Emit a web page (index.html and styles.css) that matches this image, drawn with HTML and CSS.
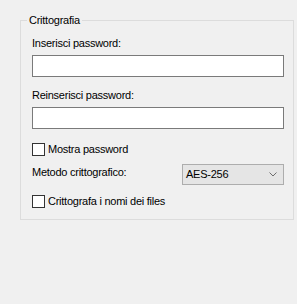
FILE: index.html
```html
<!DOCTYPE html>
<html lang="it">
<head>
<meta charset="utf-8">
<title>Crittografia</title>
<link rel="stylesheet" href="styles.css">
</head>
<body>
<div class="group">
  <span class="legend">Crittografia</span>
  <div class="label first">Inserisci password:</div>
  <div class="textbox"></div>
  <div class="label second">Reinserisci password:</div>
  <div class="textbox"></div>
  <label class="check first-check"><span class="box"></span><span class="text">Mostra password</span></label>
  <div class="method">
    <span class="label">Metodo crittografico:</span>
    <div class="combo">
      <span class="value">AES-256</span>
      <svg class="chevron" width="8" height="5" viewBox="0 0 8 5"><path d="M0.5 0.5 L4 4 L7.5 0.5" fill="none" stroke="#6d6d6d" stroke-width="1"/></svg>
    </div>
  </div>
  <label class="check second-check"><span class="box"></span><span class="text">Crittografa i nomi dei files</span></label>
</div>
</body>
</html>
```

FILE: styles.css
```css
html, body {
  margin: 0;
  padding: 0;
  background: #f0f0f0;
}
body {
  font-family: "Liberation Sans", Arial, sans-serif;
  font-size: 11px;
  letter-spacing: -0.25px;
  line-height: 15px;
  color: #000;
}
.group {
  position: relative;
  margin: 20px 0 0 20px;
  width: 274px;
  height: 200px;
  box-sizing: border-box;
  border: 1px solid #dcdcdc;
  padding: 15px 9px 0 11px;
  display: flex;
  flex-direction: column;
}
.legend {
  position: absolute;
  top: -8px;
  left: 6px;
  padding: 0 2px;
  background: #f0f0f0;
}
.label {
  height: 15px;
}
.label.second {
  margin-top: 11px;
}
.textbox {
  margin-top: 4px;
  height: 22px;
  box-sizing: border-box;
  border: 1px solid #7a7a7a;
  background: #fff;
}
.check {
  display: flex;
  align-items: center;
  height: 15px;
}
.first-check {
  margin-top: 13px;
}
.second-check {
  margin-top: 9px;
}
.box {
  width: 13px;
  height: 13px;
  box-sizing: border-box;
  border: 1px solid #333;
  background: #fff;
  margin-right: 3px;
}
.method {
  margin-top: 7px;
  display: flex;
  justify-content: space-between;
  align-items: flex-start;
  height: 21px;
}
.method .label {
  margin-top: 1px;
}
.combo {
  width: 102px;
  height: 21px;
  box-sizing: border-box;
  border: 1px solid #adadad;
  background: #e5e5e5;
  display: flex;
  align-items: center;
  justify-content: space-between;
  padding: 0 6px 0 3px;
}
.value {
  line-height: 15px;
}
.chevron {
  display: block;
}
```
